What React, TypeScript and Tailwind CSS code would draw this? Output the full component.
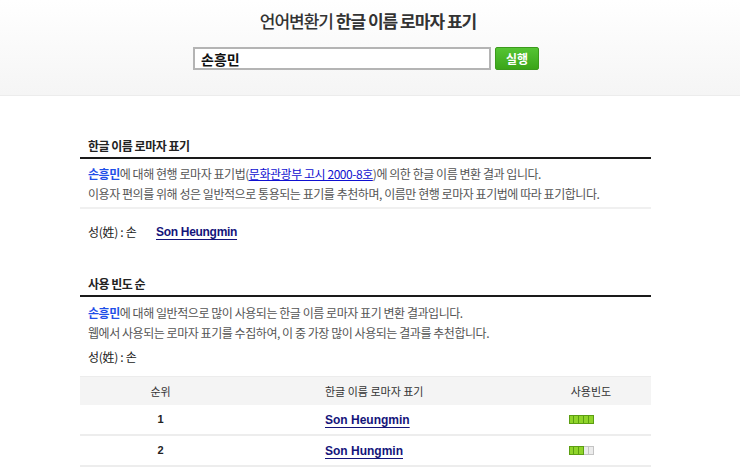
import React from "react";

const KR = "font-['Noto_Sans_CJK_KR','Noto_Sans',sans-serif]";

function UsageBar({ level }: { level: number }) {
  return (
    <div className="flex h-[9px]">
      {[0, 1, 2, 3, 4].map((i) => (
        <span
          key={i}
          className={
            i < level
              ? "h-full w-[5px] border-y border-r border-[#5c9e12] bg-[#8fd42a] first:border-l"
              : "h-full w-[5px] border-y border-r border-[#c4c4c4] bg-[#ececec]"
          }
        />
      ))}
    </div>
  );
}

function SectionTitle({ children }: { children: React.ReactNode }) {
  return (
    <h2 className="h-[24px] border-b-2 border-[#1a1a1a] pl-[8px] text-[12px] leading-[22px] font-bold tracking-[-0.5px] text-[#222]">
      {children}
    </h2>
  );
}

function NameLink({ children }: { children: React.ReactNode }) {
  return (
    <a
      href="#"
      className="font-['Liberation_Sans',Arial,sans-serif] text-[12px] font-bold text-[#14147a] underline decoration-[#14147a] underline-offset-[3px]"
    >
      {children}
    </a>
  );
}

const rows = [
  { rank: 1, name: "Son Heungmin", level: 5 },
  { rank: 2, name: "Son Hungmin", level: 3 },
];

export default function App() {
  return (
    <div className={`min-h-[475px] w-full bg-white ${KR} text-[#555]`}>
      <header className="h-[96px] border-b border-[#ececec] bg-gradient-to-b from-white to-[#f5f5f5]">
        <h1 className="pt-[8px] pr-[4px] text-center text-[17px] leading-[26px] tracking-[-1px] text-[#333]">
          <span className="font-medium">언어변환기</span> <span className="font-bold">한글 이름 로마자 표기</span>
        </h1>
        <form className="mt-[13px] flex justify-center gap-[4px] pr-[8px]" onSubmit={(e) => e.preventDefault()}>
          <input
            defaultValue="손흥민"
            className={`h-[23px] w-[298px] border-2 border-[#b4b4b4] bg-white px-[6px] text-[14px] font-bold text-[#111] outline-none ${KR}`}
          />
          <button
            type="submit"
            className="h-[23px] w-[44px] rounded-[2px] border border-[#3b9a1c] bg-gradient-to-b from-[#55c433] to-[#3aa518] text-[12px] font-bold text-white"
          >
            실행
          </button>
        </form>
      </header>

      <main className="ml-[80px] w-[571px]">
        <section className="mt-[39px]">
          <SectionTitle>한글 이름 로마자 표기</SectionTitle>
          <div className="border-b-2 border-[#f0f0f0] pt-[5px] pb-[3px] pl-[8px] text-[12px] leading-[20px] tracking-[-0.45px]">
            <p>
              <span className="font-bold text-[#1f4fe8]">손흥민</span>에 대해 현행 로마자 표기법(
              <a href="#" className="text-[#1010d0] underline">
                문화관광부 고시 2000-8호
              </a>
              )에 의한 한글 이름 변환 결과 입니다.
            </p>
            <p>이용자 편의를 위해 성은 일반적으로 통용되는 표기를 추천하며, 이름만 현행 로마자 표기법에 따라 표기합니다.</p>
          </div>
          <div className="mt-[13px] flex h-[20px] items-center pl-[8px] text-[12px] tracking-[-0.3px] text-[#222]">
            <span className="w-[68px]">성(姓) : 손</span>
            <NameLink>Son Heungmin</NameLink>
          </div>
        </section>

        <section className="mt-[31px]">
          <SectionTitle>사용 빈도 순</SectionTitle>
          <div className="pt-[6px] pl-[8px] text-[12px] leading-[20px] tracking-[-0.45px]">
            <p>
              <span className="font-bold text-[#1f4fe8]">손흥민</span>에 대해 일반적으로 많이 사용되는 한글 이름 로마자 표기 변환 결과입니다.
            </p>
            <p>웹에서 사용되는 로마자 표기를 수집하여, 이 중 가장 많이 사용되는 결과를 추천합니다.</p>
          </div>
          <div className="mt-[4px] flex h-[20px] items-center pl-[8px] text-[12px] tracking-[-0.3px] text-[#222]">
            성(姓) : 손
          </div>

          <div className="mt-[9px] text-[11px] text-[#333]">
            <div className="grid h-[29px] grid-cols-[161px_290px_120px] items-center border-t border-[#ececec] bg-[#f4f4f4]">
              <span className="text-center">순위</span>
              <span className="pl-[84px]">한글 이름 로마자 표기</span>
              <span className="text-center">사용빈도</span>
            </div>
            {rows.map((r) => (
              <div
                key={r.rank}
                className="grid h-[31px] grid-cols-[161px_290px_120px] items-center border-b-2 border-[#ededed]"
              >
                <span className="text-center font-['Liberation_Sans',Arial,sans-serif] font-bold text-[#222]">{r.rank}</span>
                <span className="pl-[84px]">
                  <NameLink>{r.name}</NameLink>
                </span>
                <span className="pl-[38px]">
                  <UsageBar level={r.level} />
                </span>
              </div>
            ))}
          </div>
        </section>
      </main>
    </div>
  );
}
